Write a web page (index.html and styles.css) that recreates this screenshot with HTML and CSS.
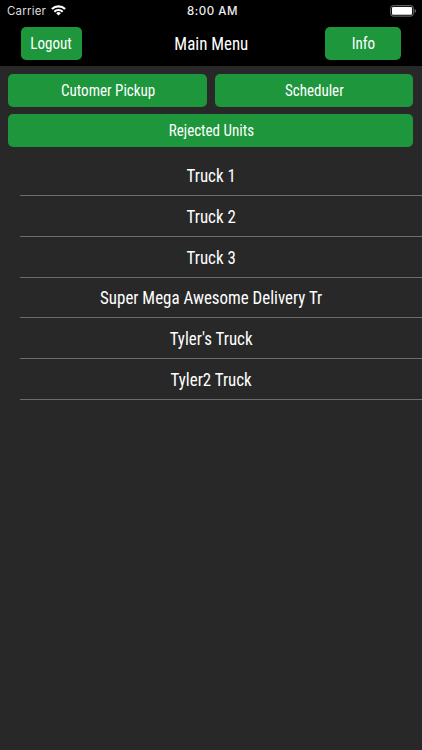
FILE: index.html
```html
<!DOCTYPE html>
<html lang="en">
<head>
<meta charset="utf-8">
<title>Main Menu</title>
<link rel="stylesheet" href="styles.css">
</head>
<body>
<header class="top">
  <div class="status">
    <div class="carrier"><span class="carrier-name">Carrier</span>
      <svg class="wifi" viewBox="0 0 14 10"><g fill="none" stroke="#fff" stroke-width="2"><path d="M.7 3.9a8.9 8.9 0 0 1 12.6 0"/><path d="M3 6.4a5.6 5.6 0 0 1 8 0"/></g><path d="M4.8 7.8a3.1 3.1 0 0 1 4.4 0L7 10z" fill="#fff"/></svg>
    </div>
    <div class="time">8:00 AM</div>
    <div class="power"><svg class="battery" viewBox="0 0 27 12"><rect x=".7" y=".7" width="22.6" height="10.4" rx="2.4" fill="none" stroke="#777"/><rect x="2" y="2" width="20" height="7.8" rx="1" fill="#fff"/><path d="M24.6 4q1.4.5 1.4 2t-1.4 2z" fill="#777"/></svg></div>
  </div>
  <nav class="nav">
    <button class="btn logout"><span class="label">Logout</span></button>
    <h1 class="title"><span class="label">Main Menu</span></h1>
    <button class="btn info"><span class="label">Info</span></button>
  </nav>
</header>
<main>
  <div class="actions">
    <button class="btn"><span class="label">Cutomer Pickup</span></button>
    <button class="btn"><span class="label">Scheduler</span></button>
    <button class="btn wide"><span class="label">Rejected Units</span></button>
  </div>
  <ul class="trucks">
    <li><span class="label">Truck 1</span></li>
    <li><span class="label">Truck 2</span></li>
    <li><span class="label">Truck 3</span></li>
    <li><span class="label">Super Mega Awesome Delivery Tr</span></li>
    <li><span class="label">Tyler's Truck</span></li>
    <li><span class="label">Tyler2 Truck</span></li>
  </ul>
</main>
</body>
</html>
```
FILE: styles.css
```css
* { box-sizing: border-box; }
body { margin: 0; min-height: 750px; background: #282828; color: #fff; font-family: Roboto, sans-serif; }
.top { height: 66px; background: #000; }
.status { height: 22px; display: grid; grid-template-columns: 1fr auto 1fr; align-items: center; padding: 0 5px 0 7px; font: 11.5px Inter, sans-serif; }
.carrier { display: flex; align-items: center; gap: 5px; }
.carrier-name { color: #ddd; letter-spacing: .2px; }
.wifi { width: 15px; height: 10.5px; margin-top: -1px; }
.time { font-weight: 500; letter-spacing: .5px; padding-left: 1px; color: #eee; }
.power { display: flex; justify-content: flex-end; }
.battery { width: 27px; height: 12px; margin-top: -1px; }
.nav { display: grid; grid-template-columns: 76px 1fr 76px; align-items: center; padding: 5px 21px 0; }
.btn { height: 33px; border: 0; border-radius: 5px; padding: 0; background: #1e963c; color: #fff; font: 16px Roboto, sans-serif; font-stretch: 75%; white-space: nowrap; }
.label { display: inline-block; transform: scaleX(.94); }
.logout { width: 61px; }
.title { margin: 0; padding-bottom: 1px; text-align: center; font-size: 18px; font-weight: 400; font-stretch: 75%; }
.actions { display: grid; grid-template-columns: 1fr 1fr; gap: 7px 8px; padding: 8px 8.6px 0 8.4px; }
.wide { grid-column: 1 / -1; }
.trucks { list-style: none; margin: 8.2px 0 0; padding: 0 0 0 20.4px; }
.trucks li { height: 40.8px; padding: 1px 20.4px 0 0; border-bottom: 1px solid #6c6c6e; display: flex; align-items: center; justify-content: center; font-size: 18px; font-stretch: 75%; }
```
